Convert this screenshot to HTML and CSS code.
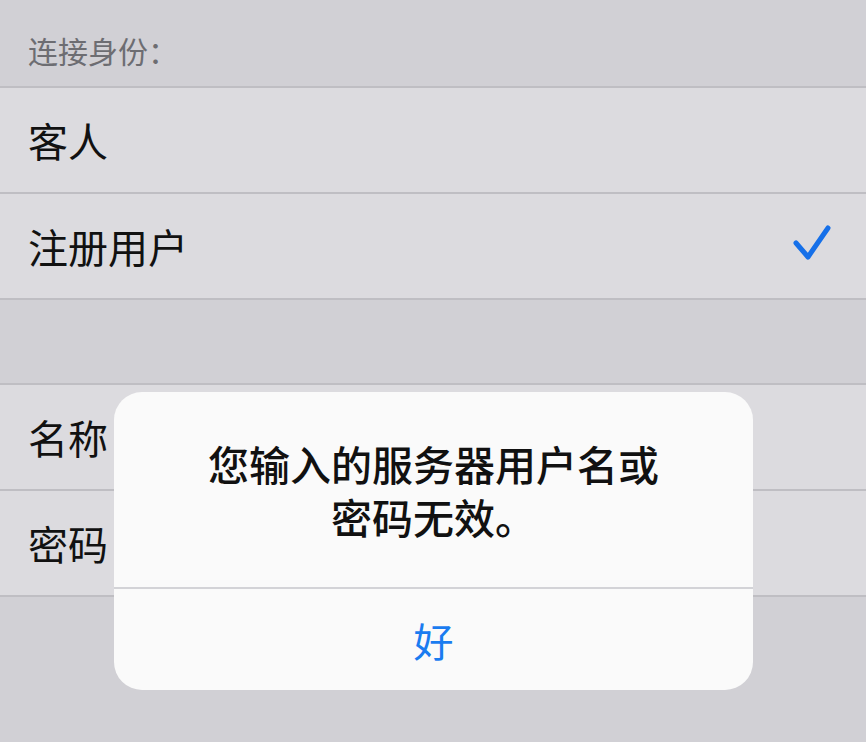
FILE: index.html
```html
<!DOCTYPE html>
<html lang="zh-CN">
<head>
    <meta charset="UTF-8">
    <meta name="viewport" content="width=device-width, initial-scale=1.0">
    <title>连接身份</title>
    <link rel="stylesheet" href="styles.css">
</head>
<body>
    <div class="screen">
        <div class="section-label">连接身份：</div>

        <div class="group">
            <div class="row">客人</div>
            <div class="row">
                <span>注册用户</span>
                <svg class="check" width="40" height="37" viewBox="0 0 40 37">
                    <path d="M4 19 L16 33 L36 4" fill="none" stroke="#1670e9" stroke-width="5" stroke-linecap="round" stroke-linejoin="round"/>
                </svg>
            </div>
        </div>

        <div class="spacer"></div>

        <div class="group">
            <div class="row">名称</div>
            <div class="row">密码</div>
        </div>

        <!-- alert sits over the list -->
        <div class="alert">
            <div class="alert-msg">
                <div class="msg-line">您输入的服务器用户名或</div>
                <div class="msg-line">密码无效。</div>
            </div>
            <div class="alert-btn">好</div>
        </div>
    </div>
</body>
</html>
```

FILE: styles.css
```css
body {
    margin: 0;
    background: #d1d0d5;
    font-family: "Noto Sans CJK SC", "Noto Sans", sans-serif;
    color: #111;
}
.screen {
    position: relative;
    width: 866px;
    height: 742px;
    overflow: hidden;
    background: #d1d0d5;
}
.section-label {
    height: 56px;
    padding: 30px 0 0 28px;
    font-size: 30px;
    line-height: 40px;
    color: #6d6d72;
}
.group {
    background: #dcdbdf;
    border-top: 2px solid #bfbec3;
}
.row {
    height: 104px;
    display: flex;
    align-items: center;
    justify-content: space-between;
    padding: 0 34px 0 28px;
    font-size: 40px;
    border-bottom: 2px solid #bfbec3;
}
.check {
    display: block;
    margin-top: -8px;
}
.spacer {
    height: 83px;
}
.alert {
    position: absolute;
    left: 114px;
    top: 392px;
    width: 639px;
    height: 298px;
    border-radius: 28px;
    background: #fafafa;
    display: flex;
    flex-direction: column;
    overflow: hidden;
}
.alert-msg {
    padding: 48px 20px 47px;
    display: flex;
    flex-direction: column;
    gap: 6px;
    text-align: center;
    font-size: 41px;
    line-height: 47px;
    font-weight: 500;
    border-bottom: 2px solid #d3d3d7;
}
.alert-btn {
    flex: 1;
    display: flex;
    align-items: center;
    justify-content: center;
    font-size: 40px;
    color: #1a7cf0;
}
```
